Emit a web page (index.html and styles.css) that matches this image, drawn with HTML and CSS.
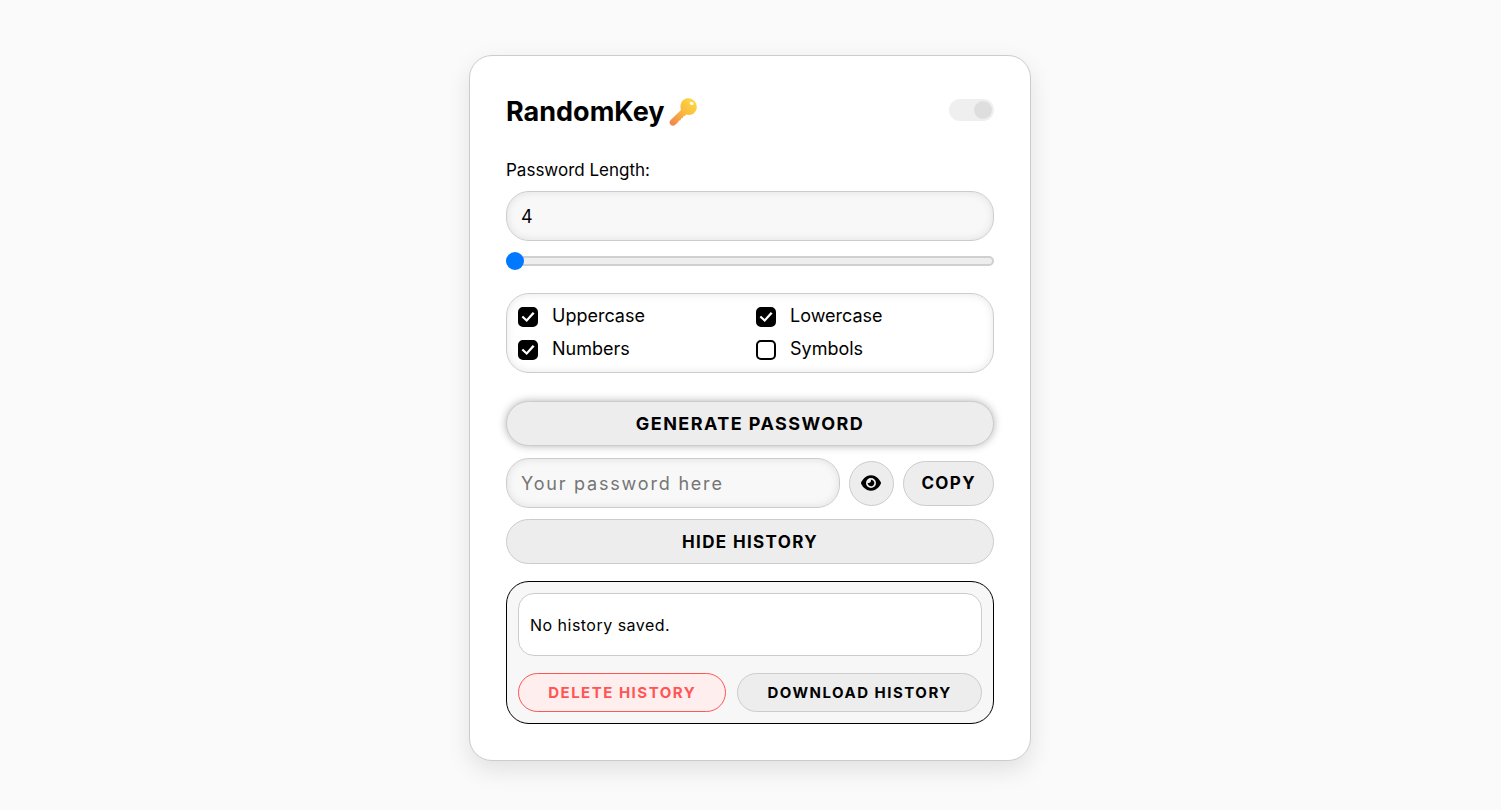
FILE: index.html
```
<!DOCTYPE html>
<html lang="en">
<head>
<meta charset="utf-8">
<meta name="viewport" content="width=device-width, initial-scale=1">
<title>RandomKey</title>
<link rel="stylesheet" href="styles.css">
</head>
<body>
<main class="card">
  <header class="header">
    <h1 class="title">RandomKey
      <svg class="key" viewBox="0 0 28 28" aria-hidden="true">
        <defs>
          <linearGradient id="gold" x1="1" y1="0" x2="0" y2="1">
            <stop offset="0" stop-color="#ffdf43"/>
            <stop offset=".5" stop-color="#f9b93f"/>
            <stop offset="1" stop-color="#f0804f"/>
          </linearGradient>
        </defs>
        <path fill="url(#gold)" fill-rule="evenodd" d="M18.5 .3C22 -.3 27.500 2.800 27.800 8.500C28 13.500 24.200 17 19.500 16.900C18.500 16.900 17.900 16.700 17.200 16.400L15.700 18C15.400 18.300 14.500 18.100 14.200 18.400C13.800 18.800 14.100 19.700 13.700 20.100C13.300 20.500 12.500 20.200 12.100 20.600C11.700 21 11.900 21.900 11.500 22.300C11.100 22.700 10.300 22.300 9.800 22.700C9.400 23.100 9.500 23.800 9.100 24.200L6.300 26.800C5 28 2.900 27.900 1.600 26.800C.3 25.600 .1 23.500 1.400 22.200L12 12C10.200 6.500 13 1.100 18.500 .3ZM20.900 4.200C20.300 5.200 21 6.200 22 6.700C23 7.200 24.200 7 24.500 6.200C24.800 5.300 24.100 4.400 23.100 3.900C22.100 3.500 21.200 3.500 20.900 4.200Z"/>
      </svg>
    </h1>
    <input class="switch" type="checkbox" role="switch" aria-label="Light theme" checked>
  </header>

  <label class="length-label" for="length">Password Length:</label>
  <input class="field" id="length" type="text" inputmode="numeric" value="4">
  <input class="slider" type="range" min="4" max="64" value="4" aria-label="Password length">

  <div class="options">
    <label class="option"><input class="check" type="checkbox" checked><span>Uppercase</span></label>
    <label class="option"><input class="check" type="checkbox" checked><span>Lowercase</span></label>
    <label class="option"><input class="check" type="checkbox" checked><span>Numbers</span></label>
    <label class="option"><input class="check" type="checkbox"><span>Symbols</span></label>
  </div>

  <button class="button generate" type="button">GENERATE PASSWORD</button>

  <div class="result">
    <input class="field password" type="text" placeholder="Your password here" aria-label="Generated password" readonly>
    <button class="button reveal" type="button" aria-label="Show password">
      <svg class="eye" viewBox="0 0 576 512" aria-hidden="true"><path d="M288 32c-80.800 0-145.500 36.800-192.600 80.600C48.600 156 17.300 208 2.500 243.700c-3.300 7.900-3.300 16.700 0 24.600C17.300 304 48.600 356 95.400 399.400C142.500 443.200 207.200 480 288 480s145.500-36.800 192.600-80.600c46.800-43.500 78.100-95.400 93-131.100c3.300-7.900 3.300-16.700 0-24.600c-14.900-35.700-46.200-87.700-93-131.100C433.500 68.800 368.800 32 288 32zM144 256a144 144 0 1 1 288 0 144 144 0 1 1-288 0zm144-64c0 35.300-28.700 64-64 64c-7.100 0-13.900-1.200-20.300-3.300c-5.500-1.800-11.900 1.600-11.700 7.400c.3 6.900 1.300 13.800 3.200 20.700c13.700 51.200 66.400 81.600 117.600 67.900s81.600-66.400 67.900-117.600c-11.100-41.500-47.800-69.400-88.600-71.100c-5.800-.2-9.200 6.100-7.400 11.700c2.100 6.400 3.300 13.200 3.300 20.300z"/></svg>
    </button>
    <button class="button copy" type="button">COPY</button>
  </div>

  <button class="button toggle-history" type="button">HIDE HISTORY</button>

  <section class="history" aria-label="Password history">
    <p class="history-list">No history saved.</p>
    <div class="history-actions">
      <button class="button small danger" type="button">DELETE HISTORY</button>
      <button class="button small" type="button">DOWNLOAD HISTORY</button>
    </div>
  </section>
</main>
</body>
</html>
```
FILE: styles.css
```
* {
  box-sizing: border-box;
}

body {
  display: flex;
  justify-content: center;
  align-items: flex-start;
  min-height: 100vh;
  margin: 0;
  padding: 55px 17px 48px 16px;
  background: #fafafa;
  color: #000;
  font-family: Inter, "Liberation Sans", sans-serif;
  font-size: 18px;
}

input,
button {
  margin: 0;
  color: inherit;
  font: inherit;
}

.card {
  display: flex;
  flex-direction: column;
  width: 100%;
  max-width: 562px;
  padding: 36px;
  border: 1px solid #ccc;
  border-radius: 23px;
  background: #fff;
  box-shadow: 0 9px 23px rgba(0, 0, 0, 0.1);
}

.header {
  display: flex;
  justify-content: space-between;
  align-items: center;
  height: 36px;
  margin-bottom: 32px;
}

.title {
  display: flex;
  align-items: center;
  gap: 4px;
  margin: 0;
  padding-top: 3px;
  font-size: 27px;
  font-weight: 700;
  line-height: 36px;
}

.key {
  width: 28px;
  height: 28px;
}

.switch {
  appearance: none;
  display: flex;
  justify-content: flex-end;
  align-items: center;
  width: 45px;
  height: 22px;
  padding: 0 2px;
  border-radius: 11px;
  background: #efefef;
}

.switch::before {
  content: "";
  width: 18px;
  height: 18px;
  border-radius: 50%;
  background: #dedede;
}

.length-label {
  margin-bottom: 10px;
  font-size: 17px;
  line-height: 21px;
}

.field {
  width: 100%;
  height: 50px;
  padding: 0 14px;
  border: 1px solid #ccc;
  border-radius: 23px;
  background: #f8f8f8;
  box-shadow: inset 0 0 9px rgba(0, 0, 0, 0.1);
}

.slider {
  appearance: none;
  width: 100%;
  height: 18px;
  margin: 11px 0 23px;
  background: transparent;
}

.slider::-webkit-slider-runnable-track {
  height: 10px;
  border: 2px solid #d0d0d0;
  border-radius: 5px;
  background: #eee;
}

.slider::-webkit-slider-thumb {
  appearance: none;
  width: 18px;
  height: 18px;
  margin: -6px 0 0 -2px;
  border-radius: 50%;
  background: #0078ff;
}

.options {
  display: grid;
  grid-template-columns: 1fr 1fr;
  gap: 11px 12px;
  padding: 11px 11px 12px;
  border: 1px solid #ccc;
  border-radius: 23px;
  box-shadow: inset 0 0 9px rgba(0, 0, 0, 0.1);
}

.option {
  display: flex;
  align-items: flex-end;
  gap: 14px;
  line-height: 22px;
}

.check {
  appearance: none;
  display: grid;
  place-items: center;
  flex: none;
  width: 20px;
  height: 20px;
  border: 2px solid #000;
  border-radius: 5px;
  background: #fff;
}

.check:checked {
  background: #000;
}

.check:checked::before {
  content: "";
  width: 14px;
  height: 12px;
  background: #fff;
  clip-path: polygon(4% 53%, 15% 40%, 40% 66%, 84% 8%, 97% 20%, 41% 92%);
}

.button {
  height: 45px;
  padding: 0 17px;
  border: 1px solid #ccc;
  border-radius: 23px;
  background: #ededed;
  font-size: 17px;
  font-weight: 700;
  letter-spacing: 0.08em;
  white-space: nowrap;
}

.generate {
  margin-top: 28px;
  box-shadow: 0 0 9px rgba(0, 0, 0, 0.3);
  font-size: 18px;
}

.result {
  display: flex;
  align-items: center;
  gap: 9px;
  margin: 12px 0 11px;
}

.password {
  flex: 1;
  min-width: 0;
  letter-spacing: 0.1em;
}

.password::placeholder {
  color: #757575;
}

.reveal {
  display: grid;
  place-items: center;
  width: 45px;
  padding: 0 2px 0 0;
}

.eye {
  width: 20px;
  height: 18px;
}

.history {
  margin-top: 17px;
  padding: 11px;
  border: 1px solid #000;
  border-radius: 23px;
  background: #f7f7f7;
}

.history-list {
  margin: 0 0 17px;
  padding: 21px 11px 19px;
  border: 1px solid #ccc;
  border-radius: 16px;
  background: #fff;
  font-size: 16px;
  line-height: 21px;
  letter-spacing: 0.03em;
}

.history-actions {
  display: flex;
  gap: 11px;
}

.small {
  flex: 1 1 auto;
  height: 39px;
  padding: 0 16px;
  border-radius: 20px;
  font-size: 15px;
  letter-spacing: 0.1em;
}

.danger {
  border-color: #ff5555;
  background: #ffeeee;
  color: #ff5555;
}
```
